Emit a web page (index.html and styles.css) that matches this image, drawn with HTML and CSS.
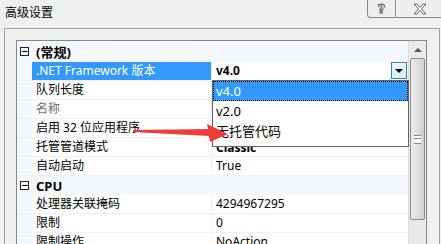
FILE: index.html
```html
<!DOCTYPE html>
<html lang="zh-CN">
<head>
  <meta charset="UTF-8" />
  <title>高级设置</title>
  <link rel="stylesheet" href="styles.css">
</head>
<body>
  <div class="window">
    <div class="titlebar">
      <span class="title">高级设置</span>
      <div class="caption-btns">
        <span class="cbtn help">?</span>
        <span class="cbtn close">
          <svg width="16" height="12" viewBox="0 0 16 12">
            <path d="M2 1h3l3 3.5 3-3.5h3l-4.5 5 4.5 5h-3l-3-3.5-3 3.5h-3l4.5-5z" fill="#fff" stroke="#444" stroke-width="0.8"/>
          </svg>
        </span>
      </div>
    </div>

    <div class="group">
      <div class="panel">
        <div class="grid">
          <div class="cat first"><span class="toggle">−</span><span class="cat-name">(常规)</span></div>
          <div class="row selected"><span class="gut"></span><span class="name">.NET Framework 版本</span><span class="val bold">v4.0<span class="drop-btn"><i></i></span></span></div>
          <!-- values of the next three rows sit under the open list -->
          <div class="row"><span class="gut"></span><span class="name">队列长度</span><span class="val"></span></div>
          <div class="row"><span class="gut"></span><span class="name grey">名称</span><span class="val"></span></div>
          <div class="row"><span class="gut"></span><span class="name">启用 32 位应用程序</span><span class="val"></span></div>
          <div class="row"><span class="gut"></span><span class="name">托管管道模式</span><span class="val bold low">Classic</span></div>
          <div class="row"><span class="gut"></span><span class="name">自动启动</span><span class="val">True</span></div>
          <div class="cat"><span class="toggle">−</span><span class="cat-name">CPU</span></div>
          <div class="row"><span class="gut"></span><span class="name">处理器关联掩码</span><span class="val">4294967295</span></div>
          <div class="row"><span class="gut"></span><span class="name">限制</span><span class="val">0</span></div>
          <div class="row"><span class="gut"></span><span class="name">限制操作</span><span class="val">NoAction</span></div>
        </div>
        <div class="scrollbar">
          <div class="sb-up"><i></i></div>
          <div class="sb-thumb"><span class="grip"></span></div>
          <div class="sb-track"></div>
        </div>
      </div>
    </div>

    <ul class="droplist">
      <li class="on">v4.0</li>
      <li>v2.0</li>
      <li>无托管代码</li>
    </ul>

    <svg class="arrow" width="441" height="244" viewBox="0 0 441 244">
      <path d="M133 132 L133 130 L208 129 L207 124 L228 134 L210 142 L209 136 Z" fill="#ee3b3b"/>
    </svg>
  </div>
</body>
</html>
```

FILE: styles.css
```css
body {
  margin: 0;
  background: #f0f0f0;
  font-family: "Noto Sans", "Noto Sans CJK SC", sans-serif;
  font-size: 12px;
  color: #000;
}
.window {
  position: relative;
  width: 441px;
  height: 244px;
  overflow: hidden;
  background: #f0f0f0;
}
.titlebar {
  height: 28px;
  display: flex;
  justify-content: space-between;
  align-items: flex-start;
}
.title {
  margin: 5px 0 0 5px;
  font-size: 12px;
  line-height: 16px;
}
.caption-btns {
  display: flex;
  margin-right: -4px;
}
.cbtn {
  height: 17px;
  border: 1px solid #8a8a8a;
  border-top: none;
  background: #eeeeee;
  display: flex;
  align-items: center;
  justify-content: center;
}
.help {
  width: 27px;
  border-radius: 0 0 0 4px;
  font: bold 13px "DejaVu Sans", sans-serif;
  color: #fff;
  -webkit-text-stroke: 0.8px #444;
}
.close {
  width: 48px;
  border-left: none;
  border-radius: 0 0 4px 0;
}

.group {
  margin-left: 4px;
  width: 436px;
  height: 216px;
  border: 1px solid #a0a0a0;
  border-bottom: none;
  padding: 11px 12px 0 11px;
  box-sizing: border-box;
}
.panel {
  display: flex;
  border: 1px solid #828790;
  border-bottom: none;
  height: 205px;
  background: #fff;
}
.grid {
  width: 392px;
  background: #fff;
}
.cat {
  height: 19px;
  display: flex;
  align-items: center;
  background: #f4f7fc;
  font-weight: bold;
  font-size: 13px;
}
.cat.first {
  height: 21px;
}
.toggle {
  width: 7px;
  height: 7px;
  border: 1px solid #222;
  margin: 0 7px 0 3px;
  font: bold 9px/7px "DejaVu Sans", sans-serif;
  text-align: center;
  background: #fff;
}
.row {
  height: 19px;
  display: flex;
  box-sizing: border-box;
  border-bottom: 1px solid #eef0f4;
}
.gut {
  width: 15px;
  background: #f4f7fc;
  flex: none;
}
.name {
  width: 180px;
  padding-left: 4px;
  box-sizing: border-box;
  line-height: 18px;
  border-right: 1px solid #eef0f4;
  flex: none;
  white-space: nowrap;
}
.name.grey {
  color: #6d6d6d;
}
.selected .name {
  background: #3399ff;
  color: #fff;
}
.val {
  flex: 1;
  padding-left: 4px;
  line-height: 18px;
  font-family: "Noto Sans", sans-serif;
  display: flex;
}
.val.low {
  padding-top: 1px;
  line-height: 17px;
}
.bold {
  font-weight: bold;
}
.drop-btn {
  margin-left: auto;
  margin-right: 1px;
  width: 14px;
  height: 15px;
  border: 1px solid #3c7fb1;
  background: linear-gradient(#eaf6fd, #d9f0fc);
  display: flex;
  align-items: center;
  justify-content: center;
}
.drop-btn i {
  border-left: 4px solid transparent;
  border-right: 4px solid transparent;
  border-top: 4px solid #000;
}

.scrollbar {
  width: 17px;
  display: flex;
  flex-direction: column;
  background: #e9e9e9;
  border-left: 1px solid #dcdcdc;
}
.sb-up {
  height: 17px;
  display: flex;
  align-items: center;
  justify-content: center;
  background: #eaeaea;
}
.sb-up i {
  border-left: 4px solid transparent;
  border-right: 4px solid transparent;
  border-bottom: 4px solid #555;
}
.sb-thumb {
  height: 160px;
  margin: 0 1px;
  border: 1px solid #8b8b8b;
  border-radius: 2px;
  background: linear-gradient(to right, #ececec, #dcdcdc 60%, #cfcfcf);
  display: flex;
  justify-content: center;
  align-items: center;
}
.grip {
  width: 7px;
  height: 7px;
  border-top: 1px solid #888;
  border-bottom: 1px solid #888;
  background: linear-gradient(#fff 2px, #888 2px, #888 3px, #fff 3px);
}
.sb-track {
  flex: 1;
}

.droplist {
  position: absolute;
  left: 212px;
  top: 80px;
  width: 197px;
  margin: 0;
  padding: 0 0 5px;
  list-style: none;
  background: #fff;
  border: 1px solid #646464;
  box-sizing: border-box;
  font-size: 13px;
}
.droplist li {
  height: 18px;
  line-height: 18px;
  padding-left: 2px;
  border: 1px solid transparent;
}
.droplist li.on {
  background: #3399ff;
  color: #fff;
  border: 1px dotted #000;
}
.arrow {
  position: absolute;
  left: 0;
  top: 0;
}
```
